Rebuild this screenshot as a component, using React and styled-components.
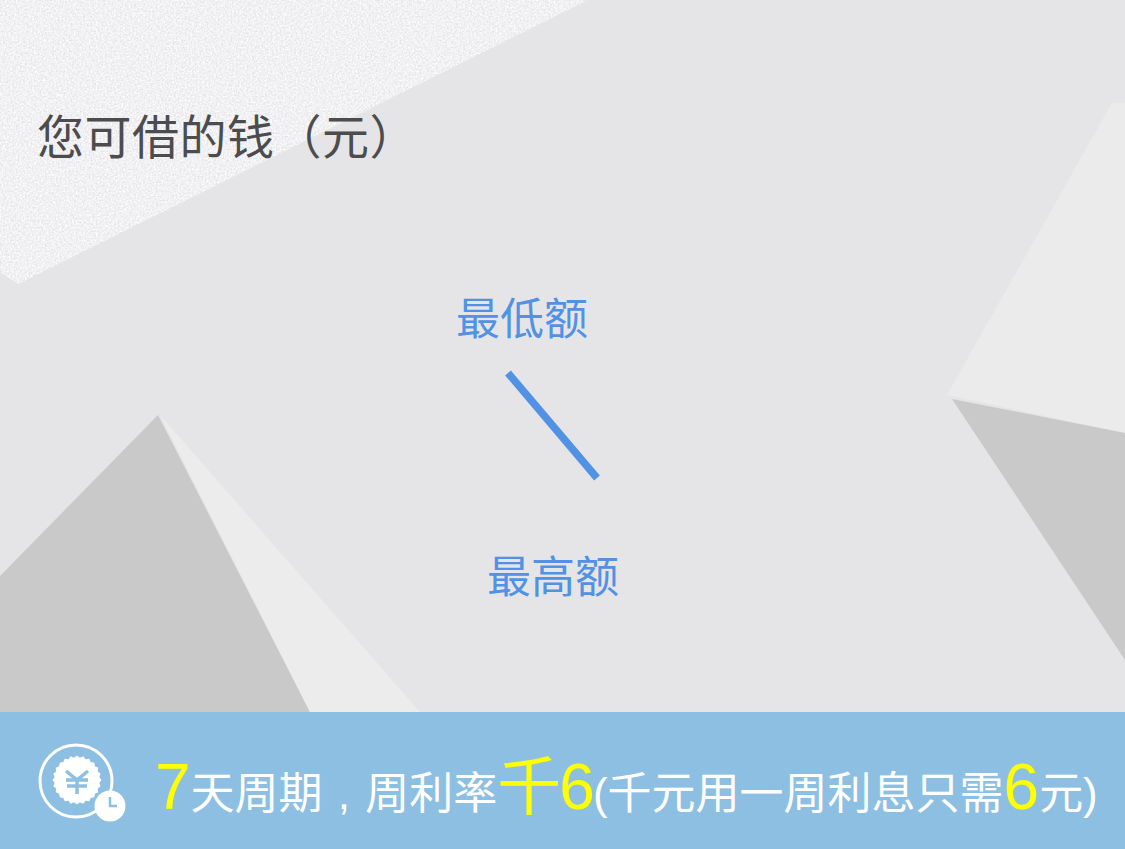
import React from 'react';
import styled, { createGlobalStyle } from 'styled-components';

const GlobalStyle = createGlobalStyle`
  html, body {
    margin: 0;
    padding: 0;
  }
  body {
    font-family: "Liberation Sans", "Noto Sans CJK SC", sans-serif;
    background: #e4e4e6;
  }
`;

const Page = styled.div`
  width: 1125px;
  height: 849px;
  display: flex;
  flex-direction: column;
  overflow: hidden;
`;

const Hero = styled.section`
  position: relative;
  height: 712px;
  padding: 110px 0 0 37px;
  box-sizing: border-box;
  background: #e5e5e7;
`;

const Backdrop = styled.svg`
  position: absolute;
  inset: 0;
`;

const Title = styled.h1`
  position: relative;
  margin: 0;
  font-size: 47px;
  line-height: 56px;
  font-weight: 400;
  letter-spacing: 0.5px;
  color: #4c4c4e;
`;

const RangeBlock = styled.div`
  position: relative;
  display: flex;
  flex-direction: column;
  margin-top: 128px;
`;

const RangeLabel = styled.div`
  margin-left: ${(props) => props.$indent}px;
  font-size: 44px;
  line-height: 52px;
  color: #5292e4;
`;

const Slash = styled.svg`
  display: block;
  margin: 24px 0 68px 465px;
`;

const Footer = styled.footer`
  height: 137px;
  display: flex;
  align-items: center;
  padding-left: 38px;
  background: #8dbfe2;
  color: #fff;
`;

const BadgeIcon = styled.svg`
  flex: none;
  margin-right: 27px;
`;

const Rate = styled.div`
  display: flex;
  align-items: baseline;
  font-size: 44px;
  white-space: pre;
  word-spacing: 3px;
`;

const Accent = styled.span`
  color: #ffff00;
  font-size: 64px;
  letter-spacing: ${(props) => (props.$tight ? '-2px' : '0')};
`;

// scalloped edge of the coin
const sealPoints = () => {
  const points = [];
  for (let i = 0; i < 48; i += 1) {
    const radius = i % 2 === 0 ? 24.5 : 22.5;
    const angle = (i / 48) * Math.PI * 2;
    points.push(`${(39 + radius * Math.cos(angle)).toFixed(1)},${(41 + radius * Math.sin(angle)).toFixed(1)}`);
  }
  return points.join(' ');
};

const App = () => (
  <Page>
    <GlobalStyle />
    <Hero>
      <Backdrop width="1125" height="712" viewBox="0 0 1125 712">
        <defs>
          <filter id="grain" x="0" y="0" width="100%" height="100%" colorInterpolationFilters="sRGB">
            <feTurbulence type="fractalNoise" baseFrequency="0.55" numOctaves="2" seed="4" />
            <feColorMatrix values="0.18 0 0 0 0.855  0.18 0 0 0 0.855  0.18 0 0 0 0.865  0 0 0 0 1" />
            <feComposite in2="SourceGraphic" operator="in" />
          </filter>
        </defs>
        <polygon points="0,0 588,0 18,284 0,272" fill="#f1f1f3" filter="url(#grain)" />
        <polygon points="158,415 0,576 0,712 310,712" fill="#c9c9c9" />
        <polygon points="160,415 420,712 310,712" fill="#ececed" />
        <polygon points="1112,103 1125,103 1125,433 947,395" fill="#ebebec" />
        <polygon points="952,399 1125,433 1125,660" fill="#c9c9c9" />
      </Backdrop>
      <Title>您可借的钱（元）</Title>
      <RangeBlock>
        <RangeLabel $indent={419}>最低额</RangeLabel>
        <Slash width="100" height="114" viewBox="0 0 100 114">
          <line x1="6" y1="3" x2="95" y2="108" stroke="#5292e4" strokeWidth="7.5" />
        </Slash>
        <RangeLabel $indent={450}>最高额</RangeLabel>
      </RangeBlock>
    </Hero>
    <Footer>
      <BadgeIcon width="90" height="84" viewBox="0 0 90 84">
        <circle cx="38" cy="42" r="36" fill="none" stroke="#fff" strokeWidth="3" />
        <polygon points={sealPoints()} fill="#fff" />
        <g stroke="#8dbfe2" strokeWidth="3.5" fill="none">
          <path d="M28 32 L39 41 L50 32" />
          <path d="M28 41 H50 M29 47 H49 M39 41 V55" />
        </g>
        <circle cx="72" cy="67" r="15.5" fill="#fff" />
        <path d="M72 58 V67 H79" stroke="#8dbfe2" strokeWidth="2.5" fill="none" />
      </BadgeIcon>
      <Rate>
        <Accent>7</Accent>
        <span>天周期 , 周利率</span>
        <Accent $tight>千6</Accent>
        <span>(千元用一周利息只需</span>
        <Accent>6</Accent>
        <span>元)</span>
      </Rate>
    </Footer>
  </Page>
);

export default App;
